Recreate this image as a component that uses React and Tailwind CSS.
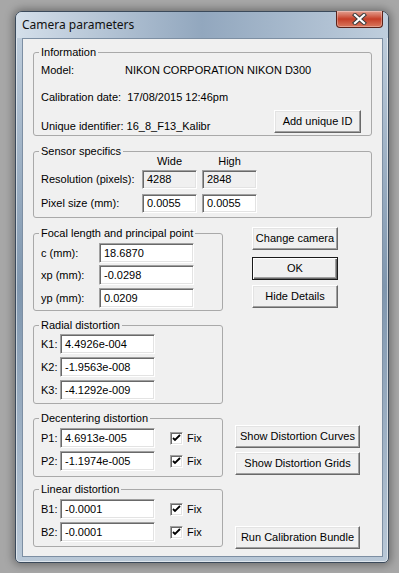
import React from "react";

const sunken =
  "border border-t-[#a0a0a0] border-l-[#a0a0a0] border-r-white border-b-white shadow-[inset_1px_1px_0_#696969,inset_-1px_-1px_0_#e3e3e3]";

function Box({ value, className, gray }) {
  return (
    <div className={`flex items-center pl-[4px] ${gray ? "bg-[#f0f0f0]" : "bg-white"} ${sunken} ${className}`}>
      {value}
    </div>
  );
}

function Btn({ children, className, isDefault }) {
  const edge = isDefault
    ? "border border-[#1a1a1a] shadow-[inset_1px_1px_0_#ffffff,inset_-1px_-1px_0_#696969,inset_-2px_-2px_0_#a0a0a0]"
    : "border border-t-white border-l-white border-r-[#696969] border-b-[#696969] shadow-[inset_-1px_-1px_0_#a0a0a0,inset_1px_1px_0_#e3e3e3]";
  return (
    <div className={`flex items-center justify-center bg-[#f0f0f0] ${edge} ${className}`}>
      {children}
    </div>
  );
}

function Check() {
  return (
    <div className={`w-[13px] h-[13px] bg-white flex items-center justify-center ${sunken}`}>
      <svg width="9" height="9" viewBox="0 0 9 9">
        <path d="M1 4 L3 6 L8 1" fill="none" stroke="#000" strokeWidth="1.8" />
      </svg>
    </div>
  );
}

function Group({ title, className, children }) {
  return (
    <fieldset className={`border border-[#a9a9a9] rounded-[3px] ${className}`}>
      <legend className="ml-[5px] px-[2px] leading-[14px]">{title}</legend>
      {children}
    </fieldset>
  );
}

function Row({ label, labelW, value, fix, className }) {
  return (
    <div className={`flex items-center ${className}`}>
      <div className={labelW}>{label}</div>
      <Box value={value} className="w-[95px] h-[20px]" />
      {fix && (
        <div className="flex items-center ml-[15px]">
          <Check />
          <span className="ml-[4px]">Fix</span>
        </div>
      )}
    </div>
  );
}

export default function App() {
  return (
    <div className="w-[399px] h-[573px] bg-[#a7a7a7] pt-[11px] pl-[15px] font-['Liberation_Sans',Arial,sans-serif] text-[11px] text-black">
      <div className="w-[374px] h-[552px] flex flex-col rounded-t-[7px] rounded-b-[5px] border border-[#3b4a5b] bg-linear-to-b from-[#c4d2e0] via-[#7f96ae] to-[#b9c8d7] shadow-[0_0_9px_2px_rgba(0,0,0,0.35),inset_0_0_0_1px_rgba(255,255,255,0.55)]">
        {/* title bar */}
        <div className="h-[26px] flex justify-between rounded-t-[6px] bg-linear-to-r from-[#d4dfea] via-[#92a7be] to-[#bfcedd]">
          <span className="self-center pl-[6px] text-[12px] font-['Noto_Sans',sans-serif] text-[#111]">
            Camera parameters
          </span>
          <div className="mr-[5px] w-[47px] h-[17px] -mt-[1px] flex items-center justify-center rounded-b-[4px] border border-t-0 border-[#5b2219] bg-linear-to-b from-[#e3a091] via-[#c53e27] to-[#d9775d] shadow-[inset_0_0_0_1px_rgba(255,255,255,0.3)]">
            <svg width="15" height="12" viewBox="0 0 15 12">
              <path d="M3 2 L12 10 M12 2 L3 10" stroke="#3c3c3c" strokeWidth="4.2" strokeLinecap="square" />
              <path d="M3 2 L12 10 M12 2 L3 10" stroke="#ffffff" strokeWidth="2.2" strokeLinecap="square" />
            </svg>
          </div>
        </div>

        {/* client area */}
        <div className="flex-1 ml-[6px] mr-[5px] mb-[5px] bg-[#f0f0f0] border border-[#7d8fa3] flex flex-col pl-[10px]">
          <Group title="Information" className="w-[339px] mt-[6px]">
            <div className="pl-[7px] pr-[10px] pb-[2px] flex flex-col">
              <div className="flex leading-[14px] mt-[4px]">
                <span className="w-[84px]">Model:</span>
                <span>NIKON CORPORATION NIKON D300</span>
              </div>
              <div className="leading-[14px] mt-[13px]">Calibration date:&nbsp; 17/08/2015 12:46pm</div>
              <div className="flex justify-between items-start mt-[6px]">
                <span className="leading-[14px] pt-[9px]">Unique identifier: 16_8_F13_Kalibr</span>
                <Btn className="w-[87px] h-[23px]">Add unique ID</Btn>
              </div>
            </div>
          </Group>

          <Group title="Sensor specifics" className="w-[339px] mt-[8px]">
            <div className="pl-[7px] pb-[4px] flex flex-col">
              <div className="flex -mt-[4px] leading-[14px]">
                <div className="w-[101px]" />
                <div className="w-[55px] text-center">Wide</div>
                <div className="w-[55px] ml-[5px] text-center">High</div>
              </div>
              <div className="flex items-center mt-[2px]">
                <div className="w-[101px]">Resolution (pixels):</div>
                <Box value="4288" gray className="w-[55px] h-[19px]" />
                <Box value="2848" gray className="w-[55px] h-[19px] ml-[5px]" />
              </div>
              <div className="flex items-center mt-[5px]">
                <div className="w-[101px]">Pixel size (mm):</div>
                <Box value="0.0055" className="w-[55px] h-[19px]" />
                <Box value="0.0055" className="w-[55px] h-[19px] ml-[5px]" />
              </div>
            </div>
          </Group>

          <div className="flex mt-[8px]">
            <div className="flex flex-col w-[190px]">
              <Group title="Focal length and principal point">
                <div className="pl-[7px] pb-[2px] flex flex-col">
                  <Row label="c (mm):" labelW="w-[58px]" value="18.6870" className="mt-[3px]" />
                  <Row label="xp (mm):" labelW="w-[58px]" value="-0.0298" className="mt-[2px]" />
                  <Row label="yp (mm):" labelW="w-[58px]" value="0.0209" className="mt-[3px]" />
                </div>
              </Group>

              <Group title="Radial distortion" className="mt-[7px]">
                <div className="pl-[7px] pb-[3px] flex flex-col">
                  <Row label="K1:" labelW="w-[19px]" value="4.4926e-004" className="mt-[2px]" />
                  <Row label="K2:" labelW="w-[19px]" value="-1.9563e-008" className="mt-[3px]" />
                  <Row label="K3:" labelW="w-[19px]" value="-4.1292e-009" className="mt-[3px]" />
                </div>
              </Group>

              <Group title="Decentering distortion" className="mt-[7px]">
                <div className="pl-[7px] pb-[5px] flex flex-col">
                  <Row label="P1:" labelW="w-[19px]" value="4.6913e-005" fix className="mt-[3px]" />
                  <Row label="P2:" labelW="w-[19px]" value="-1.1974e-005" fix className="mt-[3px]" />
                </div>
              </Group>

              <Group title="Linear distortion" className="mt-[5px]">
                <div className="pl-[7px] pb-[4px] flex flex-col">
                  <Row label="B1:" labelW="w-[19px]" value="-0.0001" fix className="mt-[3px]" />
                  <Row label="B2:" labelW="w-[19px]" value="-0.0001" fix className="mt-[3px]" />
                </div>
              </Group>
            </div>

            <div className="flex flex-col ml-[12px]">
              <Btn className="ml-[17px] mt-[1px] w-[86px] h-[23px]">Change camera</Btn>
              <Btn isDefault className="ml-[17px] mt-[7px] w-[86px] h-[23px]">OK</Btn>
              <Btn className="ml-[17px] mt-[5px] w-[86px] h-[23px]">Hide Details</Btn>
              <Btn className="mt-[117px] w-[125px] h-[23px]">Show Distortion Curves</Btn>
              <Btn className="mt-[4px] w-[125px] h-[23px]">Show Distortion Grids</Btn>
              <Btn className="mt-[51px] w-[125px] h-[23px]">Run Calibration Bundle</Btn>
            </div>
          </div>
        </div>
      </div>
    </div>
  );
}
